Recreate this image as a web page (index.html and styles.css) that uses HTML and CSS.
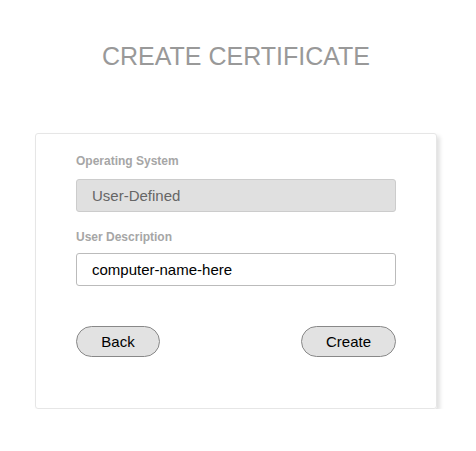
FILE: index.html
```html
<!DOCTYPE html>
<html>
<head>
<meta charset="utf-8">
<link rel="stylesheet" href="styles.css">
</head>
<body>
<h1 class="title">CREATE CERTIFICATE</h1>
<div class="card">
  <label class="label">Operating System</label>
  <div class="field field-disabled">User-Defined</div>
  <label class="label label-second">User Description</label>
  <div class="field">computer-name-here</div>
  <div class="actions">
    <button class="btn btn-back">Back</button>
    <button class="btn btn-create">Create</button>
  </div>
</div>
</body>
</html>
```

FILE: styles.css
```css
html, body {
  margin: 0;
  padding: 0;
  background: #ffffff;
  font-family: "Liberation Sans", Arial, sans-serif;
}
.title {
  margin: 0;
  padding-top: 42px;
  padding-right: 4px;
  text-align: center;
  font-weight: normal;
  font-size: 25px;
  line-height: 28px;
  color: #999999;
  letter-spacing: 0;
}
.card {
  box-sizing: border-box;
  margin: 63px 0 0 35px;
  width: 402px;
  height: 276px;
  border: 1px solid #e6e6e6;
  border-radius: 3px;
  box-shadow: 3px 3px 4px rgba(0,0,0,0.12);
  padding: 20px 40px 0 40px;
  display: flex;
  flex-direction: column;
}
.label {
  font-size: 12px;
  font-weight: bold;
  color: #a6a6a6;
  line-height: 14px;
  margin-bottom: 11px;
}
.label-second {
  margin-top: 18px;
  margin-bottom: 9px;
}
.field {
  box-sizing: border-box;
  height: 33px;
  border: 1px solid #bbbbbb;
  border-radius: 3px;
  padding: 0 15px;
  display: flex;
  align-items: center;
  font-size: 15px;
  color: #000000;
  background: #ffffff;
}
.field-disabled {
  background: #e0e0e0;
  border-color: #cccccc;
  color: #666666;
}
.actions {
  display: flex;
  justify-content: space-between;
  margin-top: 40px;
}
.btn {
  box-sizing: border-box;
  height: 31px;
  border: 1px solid #888888;
  border-radius: 16px;
  background: #e2e2e2;
  font-family: "Liberation Sans", Arial, sans-serif;
  font-size: 15px;
  color: #000000;
  padding: 0;
}
.btn-back { width: 84px; }
.btn-create { width: 95px; }
```
